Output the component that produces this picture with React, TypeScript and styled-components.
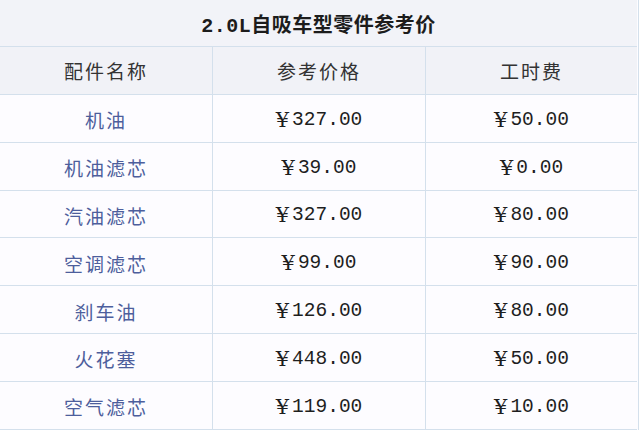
import React from "react";
import styled, { createGlobalStyle } from "styled-components";

const Global = createGlobalStyle`
  html, body { margin: 0; padding: 0; background: #ffffff; }
  body { font-family: "Noto Sans CJK SC", "Noto Sans", sans-serif; }
`;

const LINE = "#d4e0ec";

const Table = styled.div`
  width: 638px;
  display: grid;
  grid-template-columns: 213px 213px 211px;
  grid-template-rows: 47px 48px repeat(7, 47.8px);
  border-right: 1px solid ${LINE};
  background: #fdfcff;
`;

const Title = styled.div`
  grid-column: 1 / span 3;
  display: flex;
  align-items: center;
  justify-content: center;
  background: #f2f3f8;
  border-bottom: 1px solid ${LINE};
  font-family: "Liberation Mono", "Noto Sans CJK SC", monospace;
  font-size: 20px;
  font-weight: 700;
  letter-spacing: 0.5px;
  color: #1c1c1c;
`;

const Cell = styled.div<{ $last?: boolean }>`
  display: flex;
  align-items: center;
  justify-content: center;
  border-bottom: 1px solid ${LINE};
  border-right: ${(p) => (p.$last ? "none" : `1px solid ${LINE}`)};
`;

const HeadCell = styled(Cell)`
  background: #f1f2f7;
  font-size: 19px;
  letter-spacing: 2px;
  color: #333333;
  font-weight: 400;
`;

const NameCell = styled(Cell)`
  font-size: 19px;
  letter-spacing: 2px;
  color: #4d5e9c;
  font-weight: 400;
  padding-top: 3px;
`;

const PriceCell = styled(Cell)`
  font-family: "Liberation Mono", "Noto Sans CJK SC", monospace;
  font-size: 19.5px;
  color: #1e1e1e;
  padding-top: 3px;
`;

const Yen = styled.span`
  font-family: "DejaVu Serif", serif;
  font-size: 21px;
  font-weight: 400;
  margin-right: 3px;
`;

const rows = [
  ["机油", "327.00", "50.00"],
  ["机油滤芯", "39.00", "0.00"],
  ["汽油滤芯", "327.00", "80.00"],
  ["空调滤芯", "99.00", "90.00"],
  ["刹车油", "126.00", "80.00"],
  ["火花塞", "448.00", "50.00"],
  ["空气滤芯", "119.00", "10.00"],
];

export default function App() {
  return (
    <>
      <Global />
      <Table>
        <Title>2.0L自吸车型零件参考价</Title>
        <HeadCell>配件名称</HeadCell>
        <HeadCell>参考价格</HeadCell>
        <HeadCell $last>工时费</HeadCell>
        {rows.map(([name, price, fee], i) => (
          <React.Fragment key={i}>
            <NameCell>{name}</NameCell>
            <PriceCell>
              <Yen>¥</Yen>
              {price}
            </PriceCell>
            <PriceCell $last>
              <Yen>¥</Yen>
              {fee}
            </PriceCell>
          </React.Fragment>
        ))}
      </Table>
    </>
  );
}
